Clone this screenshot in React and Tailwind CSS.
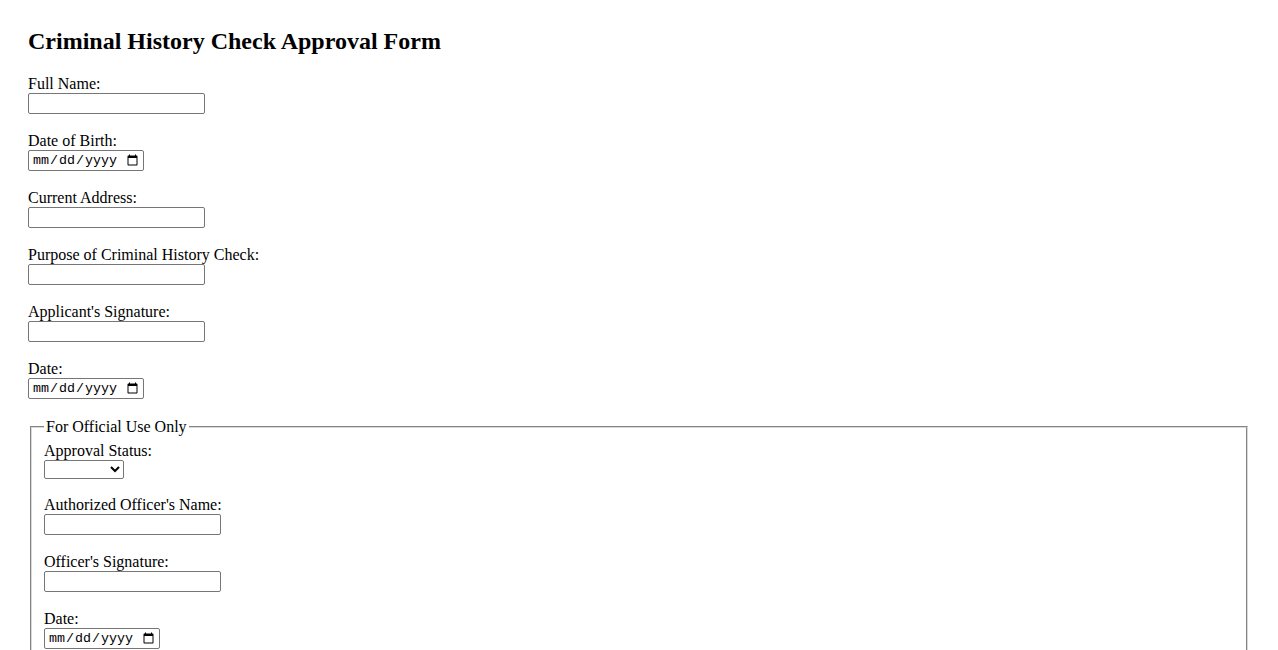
import React from 'react';

const serif = { fontFamily: '"Liberation Serif", "Times New Roman", serif' };

function TextField({ label }) {
  return (
    <div className="mb-[17px]">
      <label className="block text-[16px] leading-[19px] text-black">{label}</label>
      <input
        type="text"
        className="block h-[21px] w-[177px] border border-[#767676] rounded-[2px] bg-white px-[2px] text-[13.33px] font-['Liberation_Sans',Arial,sans-serif]"
      />
    </div>
  );
}

function DateField({ label, last = false }) {
  return (
    <div className={last ? '' : 'mb-[17px]'}>
      <label className="block text-[16px] leading-[19px] text-black">{label}</label>
      <input
        type="date"
        className="block h-[21px] w-[116px] border border-[#767676] rounded-[2px] bg-white pl-[3px] pr-[2px] text-[13.33px] font-['Liberation_Mono',monospace]"
      />
    </div>
  );
}

export default function App() {
  return (
    <div className="min-h-screen bg-white text-black px-[28px] pt-[28px]" style={serif}>
      <h2 className="text-[24px] leading-[27px] font-bold mb-[19px]">Criminal History Check Approval Form</h2>
      <form>
        <TextField label="Full Name:" />
        <DateField label="Date of Birth:" />
        <TextField label="Current Address:" />
        <TextField label="Purpose of Criminal History Check:" />
        <TextField label="Applicant's Signature:" />
        <DateField label="Date:" last />

        <fieldset className="mx-[2px] mt-[18px] border-2 [border-style:groove] border-[#d8d8d8] px-[12px] pt-[5px] pb-[10px]">
          <legend className="px-[2px] text-[16px] leading-[19px]">For Official Use Only</legend>
          <div className="mb-[16px]">
            <label className="block text-[16px] leading-[19px]">Approval Status:</label>
            <select className="block h-[19px] w-[80px] border border-[#767676] rounded-[2px] bg-white text-[13.33px] font-['Liberation_Sans',Arial,sans-serif]">
              <option value=""></option>
              <option value="approved">Approved</option>
              <option value="denied">Denied</option>
            </select>
          </div>
          <TextField label="Authorized Officer's Name:" />
          <TextField label="Officer's Signature:" />
          <DateField label="Date:" last />
        </fieldset>
      </form>
    </div>
  );
}
